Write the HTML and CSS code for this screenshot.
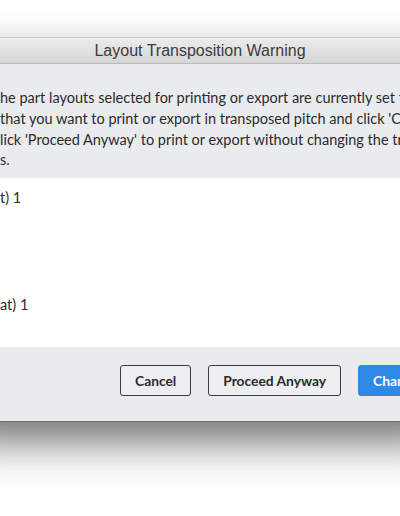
FILE: index.html
```html
<!DOCTYPE html>
<html>
<head>
<meta charset="utf-8">
<title>Layout Transposition Warning</title>
<link rel="stylesheet" href="styles.css">
</head>
<body>
<div class="dialog">
  <div class="titlebar">Layout Transposition Warning</div>
  <div class="msg">
    <div class="line">he part layouts selected for printing or export are currently set to concert pitch.</div>
    <div class="line">that you want to print or export in transposed pitch and click 'Change Layouts'.</div>
    <div class="line">lick 'Proceed Anyway' to print or export without changing the transposition setting</div>
    <div class="line">s.</div>
  </div>
  <ul class="parts">
    <li>t) 1</li>
    <li>at) 1</li>
  </ul>
  <div class="footer">
    <button class="btn">Cancel</button>
    <button class="btn">Proceed Anyway</button>
    <button class="btn primary">Change Layouts</button>
  </div>
</div>
</body>
</html>
```
FILE: styles.css
```css
html, body {
  margin: 0;
  padding: 0;
  background: #ffffff;
  overflow: hidden;
  height: 516px;
}

body {
  padding-top: 37px;
  box-sizing: border-box;
}

.dialog {
  width: 480px;
  margin-left: -40px;
  overflow: hidden;
  background: #e9ebef;
  box-shadow: 0 20px 40px rgba(0, 0, 0, 0.55);
  font-family: Lato, "Noto Sans", sans-serif;
  color: #2e2e2e;
  border-bottom: 1px solid #6c6c6e;
}

.titlebar {
  height: 25px;
  line-height: 25px;
  border-top: 1px solid #c9c9c9;
  border-bottom: 1px solid #b9b9b9;
  background: linear-gradient(to bottom, #ececec, #d6d6d6);
  text-align: center;
  font-family: "Liberation Sans", Arial, sans-serif;
  font-size: 16px;
  color: #3b3b3b;
}

.msg {
  padding: 24px 0 7px 40px;
  font-size: 14.5px;
  line-height: 20.8px;
  white-space: nowrap;
  color: #2b2b2b;
}

.parts {
  list-style: none;
  margin: 0;
  padding: 10px 0 32px 40px;
  background: #ffffff;
  display: flex;
  flex-direction: column;
  gap: 87px;
  font-size: 14.5px;
  line-height: 20px;
  color: #2b2b2b;
}

.footer {
  display: flex;
  gap: 17px;
  padding: 18px 0 25px 160px;
  white-space: nowrap;
}

.btn {
  height: 31px;
  box-sizing: border-box;
  padding: 0 14px;
  border: 1px solid #3c3c3c;
  border-radius: 3px;
  background: #eceef1;
  font-family: Lato, "Noto Sans", sans-serif;
  font-weight: bold;
  font-size: 13.8px;
  color: #2b2b2b;
  flex-shrink: 0;
}

.btn.primary {
  background: #2e8ae6;
  border-color: #2e8ae6;
  color: #ffffff;
}
```
